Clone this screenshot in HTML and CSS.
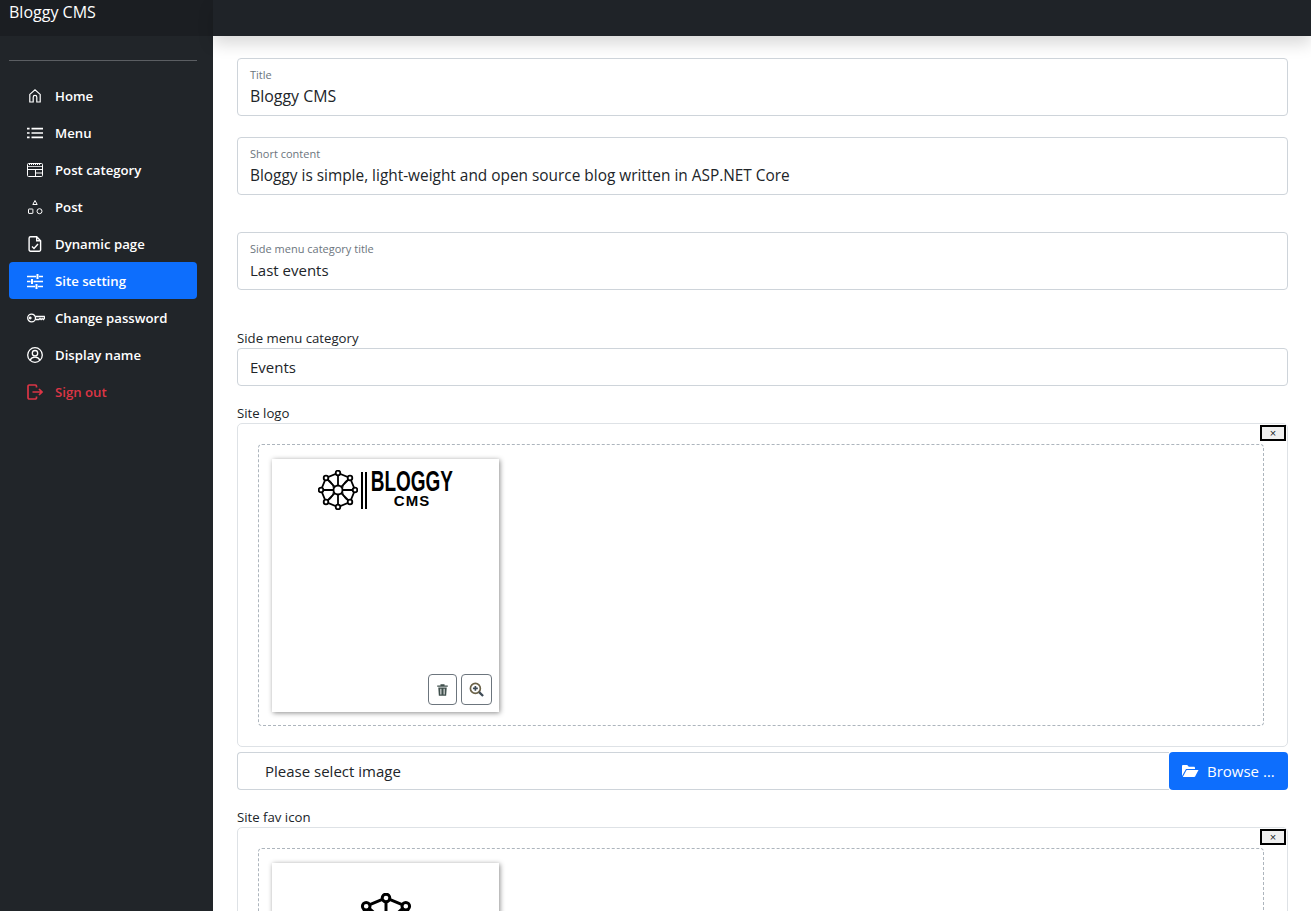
FILE: index.html
```html
<!DOCTYPE html>
<html lang="en">

<head>
    <meta charset="UTF-8">
    <meta name="viewport" content="width=device-width, initial-scale=1.0">
    <title>Bloggy CMS - Site setting</title>
    <link rel="stylesheet" href="styles.css">
</head>

<body>
    <svg class="defs" width="0" height="0" aria-hidden="true">
        <symbol id="wheel" viewBox="-20 -20 40 40">
            <g fill="none" stroke="#000" stroke-width="1.8">
                <path d="M0-17 12-12 17 0 12 12 0 17-12 12-17 0-12-12Z" />
                <path d="M0-4.500V-17M0 4.500V17M-4.500 0H-17M4.500 0H17M3.200-3.200 12-12M-3.200-3.200-12-12M3.200 3.200 12 12M-3.200 3.200-12 12" />
                <path d="M-12-12Q-5-9-4.500-1M12-12Q5-9 4.500-1M-12 12Q-5 9-4.500 1M12 12Q5 9 4.500 1" stroke-width="1" />
                <circle r="4.500" fill="#fff" />
                <circle cy="-17" r="2.300" fill="#fff" />
                <circle cy="17" r="2.300" fill="#fff" />
                <circle cx="-17" r="2.300" fill="#fff" />
                <circle cx="17" r="2.300" fill="#fff" />
                <circle cx="12" cy="-12" r="2.300" fill="#fff" />
                <circle cx="-12" cy="-12" r="2.300" fill="#fff" />
                <circle cx="12" cy="12" r="2.300" fill="#fff" />
                <circle cx="-12" cy="12" r="2.300" fill="#fff" />
            </g>
        </symbol>
    </svg>

    <div class="app">
        <!-- sidebar -->
        <aside class="sidebar">
            <div class="brand">Bloggy CMS</div>
            <hr class="side-line">
            <nav class="side-nav">
                <a class="side-link" href="#">
                    <svg class="side-icon" viewBox="0 0 16 16" fill="none" stroke="currentColor" stroke-width="1.200"><path d="M2.800 14V6.400L8 1.800l5.200 4.600V14h-3.400V9.200a1.800 1.800 0 0 0-3.600 0V14z" /></svg>
                    Home
                </a>
                <a class="side-link" href="#">
                    <svg class="side-icon" viewBox="0 0 16 16" fill="currentColor"><path d="M4.500 2.800H16v1.600H4.500zM4.500 7.200H16v1.600H4.500zM4.500 11.600H16v1.600H4.500zM0 2.800h2.600v1.600H0zM0 7.200h2.600v1.600H0zM0 11.600h2.600v1.600H0z" /></svg>
                    Menu
                </a>
                <a class="side-link" href="#">
                    <svg class="side-icon" viewBox="0 0 16 16" fill="none" stroke="currentColor"><rect x=".5" y="1.500" width="15" height="13" rx="1" /><path d="M.5 7.500h15M8.500 7.500v7M8.500 11h7" /><path d="M.5 4.500h15" stroke-width=".8" /><path d="M2 2.500h12" stroke-dasharray="1 1" /></svg>
                    Post category
                </a>
                <a class="side-link" href="#">
                    <svg class="side-icon" viewBox="0 0 16 16" fill="none" stroke="currentColor"><path d="M8 1.500 10.200 5.500H5.800z" /><rect x="1.500" y="10" width="4.400" height="4.400" rx=".4" /><circle cx="12.500" cy="12.200" r="2.500" /></svg>
                    Post
                </a>
                <a class="side-link" href="#">
                    <svg class="side-icon" viewBox="0 0 16 16" fill="none" stroke="currentColor" stroke-width="1.400"><path d="M3.500.8h6.200l3.900 4v9a1.400 1.400 0 0 1-1.400 1.400h-8.700a1.400 1.400 0 0 1-1.400-1.400V2.200A1.400 1.400 0 0 1 3.500.8zM9.700.8v4h3.900" /><path d="M5 10.500l2 2 4-4.500" /></svg>
                    Dynamic page
                </a>
                <a class="side-link active" href="#">
                    <svg class="side-icon" viewBox="0 0 16 16" fill="none" stroke="currentColor" stroke-width="1.500"><path d="M0 3.500h9M12 3.500h4M0 8.500h3.500M6.500 8.500H16M0 13.500h8M11 13.500h5" /><path d="M10.500 1v5M5 6v5M9.500 11v5" stroke-width="2" /></svg>
                    Site setting
                </a>
                <a class="side-link" href="#">
                    <svg class="side-icon key-icon" viewBox="0 0 18 16" fill="none" stroke="currentColor" stroke-width="1.300"><circle cx="4.600" cy="8" r="3.900" /><circle cx="3.200" cy="8" r=".8" /><path d="M8.400 6.500h8.800l.5 1.500-1.300 1.500-1.200-1-1.100 1-1.100-1-1.100 1H8.400" /></svg>
                    Change password
                </a>
                <a class="side-link" href="#">
                    <svg class="side-icon" viewBox="0 0 16 16" fill="none" stroke="currentColor" stroke-width="1.300"><circle cx="8" cy="8" r="7.300" /><circle cx="8" cy="6.200" r="2.700" /><path d="M3 13.200c1-2 3-3 5-3s4 1 5 3" /></svg>
                    Display name
                </a>
                <a class="side-link danger" href="#">
                    <svg class="side-icon" viewBox="0 0 16 16" fill="none" stroke="currentColor" stroke-width="1.700"><path d="M9.500 3.500V2.200A1.200 1.200 0 0 0 8.300 1H2.200A1.200 1.200 0 0 0 1 2.200v11.600A1.200 1.200 0 0 0 2.200 15h6.100a1.200 1.200 0 0 0 1.200-1.200v-1.300" /><path d="M5.500 8H15M12 5l3 3-3 3" /></svg>
                    Sign out
                </a>
            </nav>
        </aside>

        <div class="page">
            <header class="topbar"></header>
            <main class="content">
                <div class="float-field field-title">
                    <label class="float-label">Title</label>
                    <div class="float-value">Bloggy CMS</div>
                </div>
                <div class="float-field field-short">
                    <label class="float-label">Short content</label>
                    <div class="float-value">Bloggy is simple, light-weight and open source blog written in ASP.NET Core</div>
                </div>
                <div class="float-field field-side">
                    <label class="float-label">Side menu category title</label>
                    <div class="float-value">Last events</div>
                </div>

                <label class="form-label label-category">Side menu category</label>
                <div class="form-select">Events</div>

                <label class="form-label label-logo">Site logo</label>
                <div class="file-box">
                    <button class="file-close" type="button">×</button>
                    <div class="file-drop">
                        <div class="thumb">
                            <div class="logo">
                                <svg class="logo-wheel"><use href="#wheel" /></svg>
                                <span class="logo-bars"></span>
                                <div class="logo-text">
                                    <span class="logo-name">BLOGGY</span>
                                    <span class="logo-cms">CMS</span>
                                </div>
                            </div>
                            <div class="thumb-actions">
                                <button class="thumb-btn" type="button">
                                    <svg viewBox="0 0 16 16" width="13" height="14" fill="#3f4f4c" fill-rule="evenodd"><path d="M1.500 2.500h13V4h-13zM5.500 1h5v1.500h-5zM2.800 5h10.400l-.7 10H3.500zM5.400 6.500v7h1.200v-7zM9.400 6.500v7h1.200v-7z" /></svg>
                                </button>
                                <button class="thumb-btn" type="button">
                                    <svg viewBox="0 0 16 16" width="15" height="15" fill="none" stroke="#3d4a55" stroke-width="1.800"><circle cx="6.800" cy="6.800" r="5.300" stroke="#6b6248" /><path d="M6.800 4.200v5.200M4.200 6.800h5.200" /><path d="M10.800 10.800 15 15" stroke-width="2.400" /></svg>
                                </button>
                            </div>
                        </div>
                    </div>
                </div>
                <div class="file-input">
                    <div class="file-caption">Please select image</div>
                    <button class="browse-btn" type="button">
                        <svg viewBox="0 0 18 16" width="18" height="16" fill="currentColor"><path d="M1 13V3.200C1 2.500 1.500 2 2.200 2h4l1.600 1.700h5c.7 0 1.200.5 1.200 1.200V6H5L1 13z" /><path d="M5.600 7H17.500l-3.400 6.500c-.2.300-.5.500-.9.500H1.800z" /></svg>
                        Browse …
                    </button>
                </div>

                <label class="form-label label-fav">Site fav icon</label>
                <div class="file-box">
                    <button class="file-close" type="button">×</button>
                    <div class="file-drop">
                        <div class="thumb thumb-fav">
                            <svg class="fav-wheel"><use href="#wheel" /></svg>
                        </div>
                    </div>
                </div>
            </main>
        </div>
    </div>
</body>

</html>
```

FILE: styles.css
```css
* {
    box-sizing: border-box;
}

body {
    margin: 0;
    height: 100vh;
    overflow: hidden;
    font-family: "Open Sans", "Noto Sans", sans-serif;
    font-size: 15px;
    color: #212529;
    background-color: #fff;
}

.defs {
    position: absolute;
}

.app {
    display: grid;
    grid-template-columns: 213px 1fr;
    height: 100vh;
    overflow: hidden;
}

/* sidebar */
.sidebar {
    background-color: #212529;
    color: #fff;
}

.brand {
    height: 36px;
    padding: 0 9px;
    font-size: 16px;
    line-height: 24px;
    background-color: #1b1e22;
}

.side-line {
    margin: 24px 16px 0 9px;
    border: none;
    border-top: 1px solid #5b5e62;
}

.side-nav {
    display: flex;
    flex-direction: column;
    margin: 16px 16px 0 9px;
}

.side-link {
    display: flex;
    align-items: center;
    gap: 12px;
    height: 37px;
    padding-left: 18px;
    border-radius: 4px;
    color: #fff;
    font-size: 13.2px;
    font-weight: 600;
    text-decoration: none;
}

.side-link.active {
    background-color: #0d6efd;
}

.side-link.danger {
    color: #dc3545;
}

.side-icon {
    width: 16px;
    height: 16px;
    flex: none;
}

.key-icon {
    width: 18px;
    margin-right: -2px;
}

/* top bar and form */
.page {
    min-width: 0;
}

.topbar {
    height: 36px;
    background-color: #1f2328;
    box-shadow: 0 8px 16px rgba(0, 0, 0, 0.15);
}

.content {
    padding: 22px 23px 0 24px;
}

.float-field {
    height: 58px;
    padding: 8px 12px 0;
    border: 1px solid #ced4da;
    border-radius: 4px;
}

.field-short {
    margin-top: 21px;
}

.field-side {
    margin-top: 37px;
}

.float-label {
    display: block;
    margin-bottom: 2px;
    font-size: 11px;
    line-height: 15px;
    color: #6c757d;
}

.float-value {
    font-size: 15px;
    line-height: 24px;
}

.field-title .float-value {
    font-size: 15.9px;
}

.field-short .float-value {
    padding-top: 1px;
    font-size: 15.4px;
}

.form-label {
    display: block;
    font-size: 13.2px;
    line-height: 18px;
    margin-bottom: 1px;
}

.label-category {
    margin-top: 39px;
}

.label-logo,
.label-fav {
    margin-top: 18px;
}

.form-select {
    height: 38px;
    padding: 6px 12px;
    border: 1px solid #ced4da;
    border-radius: 4px;
    font-size: 15px;
    line-height: 24px;
}

/* file upload widget */
.file-box {
    position: relative;
    height: 324px;
    padding: 20px 23px 20px 20px;
    border: 1px solid #dee2e6;
    border-radius: 5px;
}

.file-close {
    position: absolute;
    top: 1px;
    right: 1px;
    width: 26px;
    height: 16px;
    padding: 0;
    border: 2px solid #000;
    background-color: #efefef;
    font-size: 11px;
    line-height: 10px;
    color: #212529;
}

.file-drop {
    height: 282px;
    padding: 14px 13px;
    border: 1px dashed #adb5bd;
    border-radius: 4px;
}

.thumb {
    position: relative;
    width: 227px;
    height: 253px;
    background-color: #fff;
    box-shadow: 1px 1px 5px rgba(0, 0, 0, 0.45);
}

.logo {
    display: flex;
    align-items: center;
    justify-content: center;
    padding-top: 11px;
    color: #000;
}

.logo-wheel {
    width: 40px;
    height: 40px;
    flex: none;
}

.logo-bars {
    width: 6px;
    height: 37px;
    margin: 0 4px 0 3px;
    border-left: 2px solid #000;
    border-right: 2px solid #000;
}

.logo-text {
    display: flex;
    flex-direction: column;
    align-items: center;
    margin-top: -3px;
    font-family: "Liberation Sans", sans-serif;
    font-weight: 700;
}

.logo-name {
    display: inline-block;
    margin: 0 -21.5px;
    font-size: 29px;
    line-height: 25px;
    transform: scaleX(0.654);
}

.logo-cms {
    font-size: 15px;
    line-height: 14px;
    letter-spacing: 1px;
}

.thumb-fav {
    padding-top: 30px;
}

.fav-wheel {
    display: block;
    width: 66px;
    height: 66px;
    margin: 0 auto;
}

.thumb-actions {
    position: absolute;
    right: 7px;
    bottom: 7px;
    display: flex;
    gap: 4px;
}

.thumb-btn {
    display: flex;
    align-items: center;
    justify-content: center;
    width: 29px;
    height: 31px;
    padding: 0;
    border: 1px solid #6c757d;
    border-radius: 4px;
    background-color: #fff;
}

.thumb-btn:last-child {
    width: 31px;
}

.file-input {
    display: flex;
    height: 38px;
    margin-top: 5px;
}

.file-caption {
    flex: 1;
    padding: 6px 12px 6px 27px;
    border: 1px solid #ced4da;
    border-right: none;
    border-radius: 4px 0 0 4px;
    font-size: 15px;
    line-height: 24px;
}

.browse-btn {
    display: flex;
    align-items: center;
    gap: 8px;
    width: 119px;
    padding: 0 12px;
    border: none;
    border-radius: 4px;
    background-color: #0d6efd;
    color: #fff;
    font-family: inherit;
    font-size: 15px;
}
```
